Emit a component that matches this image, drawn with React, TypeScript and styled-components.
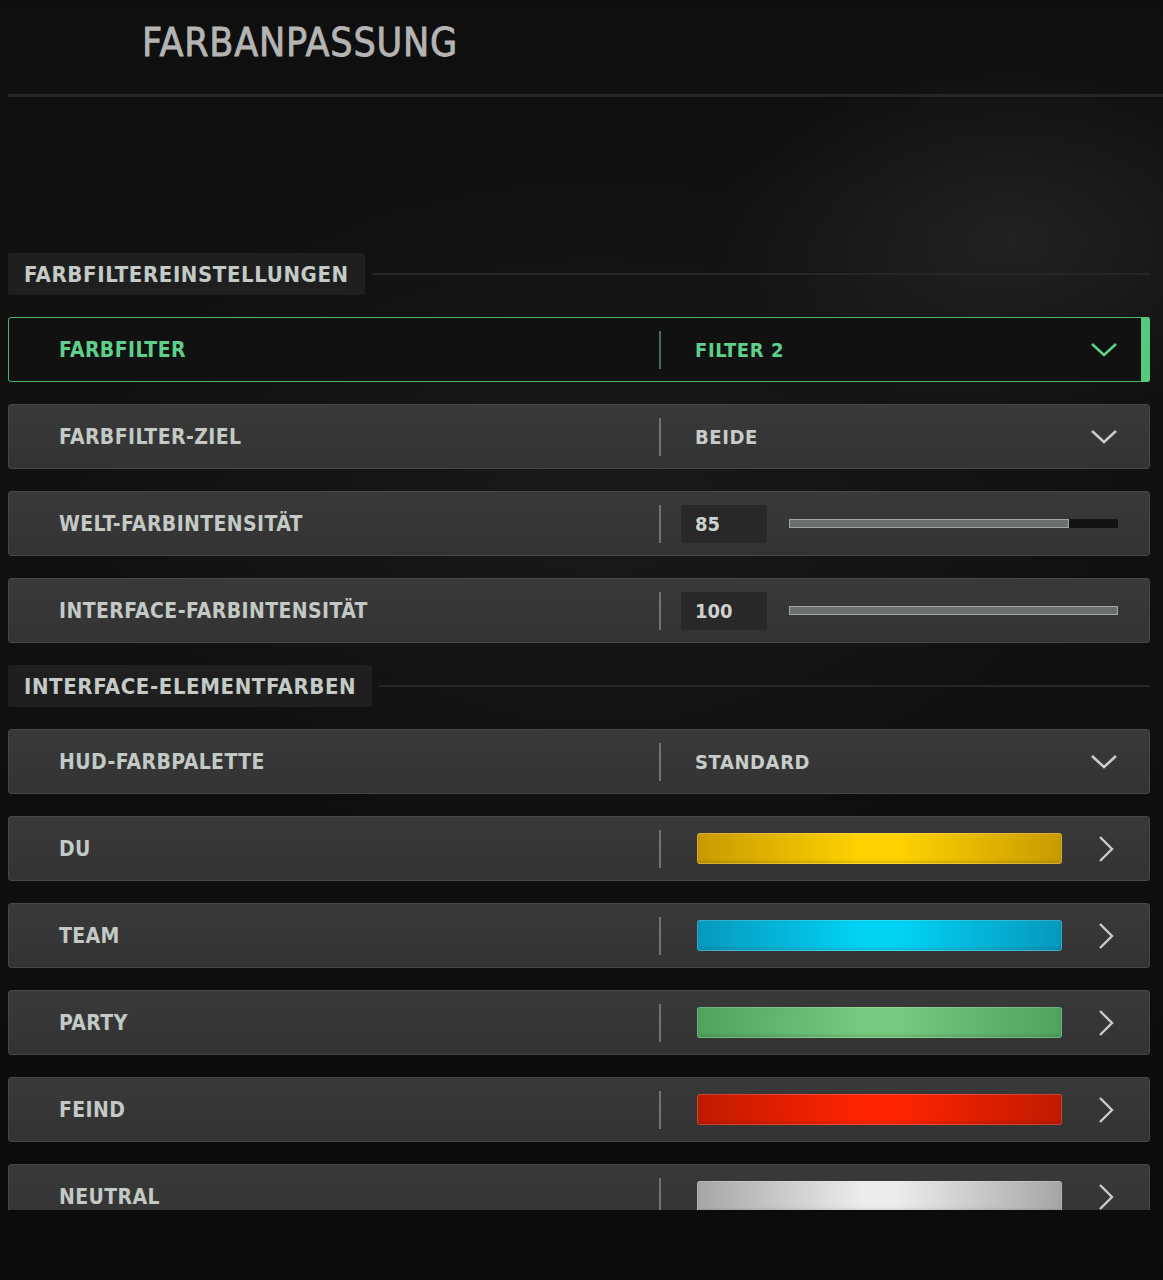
import React from "react";
import styled, { createGlobalStyle, css } from "styled-components";

const GlobalStyle = createGlobalStyle`
  html, body { margin: 0; padding: 0; }
  body {
    background: #0c0c0c;
    font-family: "DejaVu Sans Condensed", "DejaVu Sans", sans-serif;
  }
  * { box-sizing: border-box; }
`;

const FONT = `"DejaVu Sans Condensed", "DejaVu Sans", sans-serif`;

const Screen = styled.div`
  width: 1163px;
  height: 1280px;
  overflow: hidden;
  background:
    radial-gradient(ellipse 420px 260px at 1010px 240px, rgba(48,48,48,0.55), rgba(0,0,0,0) 70%),
    radial-gradient(ellipse 700px 500px at 600px 500px, rgba(30,30,30,0.6), rgba(0,0,0,0) 75%),
    linear-gradient(180deg, #0f0f0f 0%, #111 40%, #0b0b0b 100%);
`;

const Header = styled.header`
  height: 97px;
  margin-left: 8px;
  padding-left: 134px;
  padding-top: 23px;
  border-bottom: 3px solid #262626;
`;

const Title = styled.h1`
  margin: 0;
  font-family: ${FONT};
  font-weight: normal;
  font-size: 39px;
  line-height: 1;
  letter-spacing: 0.8px;
  color: #b4b4b4;
  -webkit-text-stroke: 0.8px #b4b4b4;
`;

const Viewport = styled.main`
  height: 1113px;
  overflow: hidden;
  padding: 156px 13px 0 8px;
  display: flex;
  flex-direction: column;
  gap: 22px;
`;

const SectionHead = styled.div`
  display: flex;
  align-items: center;
  gap: 7px;
  height: 42px;
  flex: none;
`;

const SectionLabel = styled.h2`
  margin: 0;
  height: 42px;
  display: flex;
  align-items: center;
  padding: 0 16px;
  background: #1f1f1f;
  border-radius: 3px;
  font-family: ${FONT};
  font-weight: bold;
  font-size: 22px;
  letter-spacing: 0.6px;
  color: #c4cac5;
`;

const SectionRule = styled.div`
  flex: 1;
  height: 2px;
  background: #262626;
`;

const Row = styled.div<{ $active?: boolean }>`
  position: relative;
  flex: none;
  height: 65px;
  display: flex;
  align-items: center;
  border-radius: 3px;
  ${(p) =>
    p.$active
      ? css`
          background: #101110;
          border: 1px solid #4db671;
        `
      : css`
          background: linear-gradient(180deg, #393939 0%, #333 100%);
          border: 1px solid #474747;
        `}
`;

const ActiveBar = styled.span`
  position: absolute;
  right: -1px;
  top: -1px;
  bottom: -1px;
  width: 9px;
  background: #55c97b;
  border-radius: 0 3px 3px 0;
`;

const Label = styled.span<{ $active?: boolean }>`
  flex: none;
  width: 650px;
  padding-left: 50px;
  font-family: ${FONT};
  font-weight: bold;
  font-size: 21px;
  letter-spacing: 0.4px;
  color: ${(p) => (p.$active ? "#5ed08a" : "#c3c9c4")};
`;

const Divider = styled.span<{ $active?: boolean }>`
  flex: none;
  width: 2px;
  height: 38px;
  background: ${(p) => (p.$active ? "#4a6a55" : "#727272")};
`;

const Control = styled.div<{ $inset: number }>`
  flex: 1;
  min-width: 0;
  display: flex;
  align-items: center;
  padding-left: ${(p) => p.$inset}px;
  padding-right: 31px;
`;

const Value = styled.span<{ $active?: boolean }>`
  flex: 1;
  font-family: ${FONT};
  font-weight: bold;
  font-size: 20px;
  letter-spacing: 0.6px;
  color: ${(p) => (p.$active ? "#5ed08a" : "#c8ccc9")};
`;

const IconCell = styled.span`
  flex: none;
  width: 28px;
  display: flex;
  justify-content: center;
  align-items: center;
`;

const NumberBox = styled.span`
  flex: none;
  width: 86px;
  height: 38px;
  display: flex;
  align-items: center;
  padding-left: 14px;
  background: #282828;
  border-radius: 3px;
  font-family: ${FONT};
  font-weight: bold;
  font-size: 20px;
  color: #cdd2ce;
`;

const Track = styled.div`
  flex: none;
  margin-left: 22px;
  width: 329px;
  height: 9px;
  background: #131313;
  display: flex;
`;

const Fill = styled.div`
  height: 100%;
  background: #6a706b;
  border: 1px solid #a2a6a2;
`;

const Swatch = styled.div<{ $edge: string; $mid: string }>`
  flex: none;
  width: 365px;
  height: 31px;
  margin-left: 1px;
  margin-right: 30px;
  border-radius: 3px;
  border: 1px solid rgba(255, 255, 255, 0.18);
  background: linear-gradient(
    90deg,
    ${(p) => p.$edge} 0%,
    ${(p) => p.$mid} 45%,
    ${(p) => p.$mid} 55%,
    ${(p) => p.$edge} 100%
  );
  box-shadow: inset 0 -2px 3px rgba(0, 0, 0, 0.12);
`;

const ChevronDown = ({ color }: { color: string }) => (
  <svg width="28" height="16" viewBox="0 0 28 16">
    <polyline points="2,2 14,13 26,2" fill="none" stroke={color} strokeWidth="2.6" />
  </svg>
);

const ChevronRight = () => (
  <svg width="16" height="28" viewBox="0 0 16 28">
    <polyline points="2,2 14,14 2,26" fill="none" stroke="#c9cdca" strokeWidth="2.4" />
  </svg>
);

type DropdownProps = { label: string; value: string; active?: boolean };
const DropdownRow = ({ label, value, active }: DropdownProps) => (
  <Row $active={active}>
    <Label $active={active}>{label}</Label>
    <Divider $active={active} />
    <Control $inset={34}>
      <Value $active={active}>{value}</Value>
      <IconCell>
        <ChevronDown color={active ? "#5ed08a" : "#c9cdca"} />
      </IconCell>
    </Control>
    {active && <ActiveBar />}
  </Row>
);

const SliderRow = ({ label, value }: { label: string; value: number }) => (
  <Row>
    <Label>{label}</Label>
    <Divider />
    <Control $inset={20}>
      <NumberBox>{value}</NumberBox>
      <Track>
        <Fill style={{ width: `${value}%` }} />
      </Track>
    </Control>
  </Row>
);

const ColorRow = ({ label, edge, mid }: { label: string; edge: string; mid: string }) => (
  <Row>
    <Label>{label}</Label>
    <Divider />
    <Control $inset={35}>
      <Swatch $edge={edge} $mid={mid} />
      <IconCell>
        <ChevronRight />
      </IconCell>
    </Control>
  </Row>
);

const Section = ({ title }: { title: string }) => (
  <SectionHead>
    <SectionLabel>{title}</SectionLabel>
    <SectionRule />
  </SectionHead>
);

export default function App() {
  return (
    <Screen>
      <GlobalStyle />
      <Header>
        <Title>FARBANPASSUNG</Title>
      </Header>
      <Viewport>
        <Section title="FARBFILTEREINSTELLUNGEN" />
        <DropdownRow label="FARBFILTER" value="FILTER 2" active />
        <DropdownRow label="FARBFILTER-ZIEL" value="BEIDE" />
        <SliderRow label="WELT-FARBINTENSITÄT" value={85} />
        <SliderRow label="INTERFACE-FARBINTENSITÄT" value={100} />
        <Section title="INTERFACE-ELEMENTFARBEN" />
        <DropdownRow label="HUD-FARBPALETTE" value="STANDARD" />
        <ColorRow label="DU" edge="#c99a00" mid="#ffd200" />
        <ColorRow label="TEAM" edge="#0898bd" mid="#00d3f4" />
        <ColorRow label="PARTY" edge="#4ea35e" mid="#74cb7e" />
        <ColorRow label="FEIND" edge="#c01a00" mid="#ff2400" />
        <ColorRow label="NEUTRAL" edge="#a6a6a6" mid="#ececec" />
      </Viewport>
    </Screen>
  );
}
